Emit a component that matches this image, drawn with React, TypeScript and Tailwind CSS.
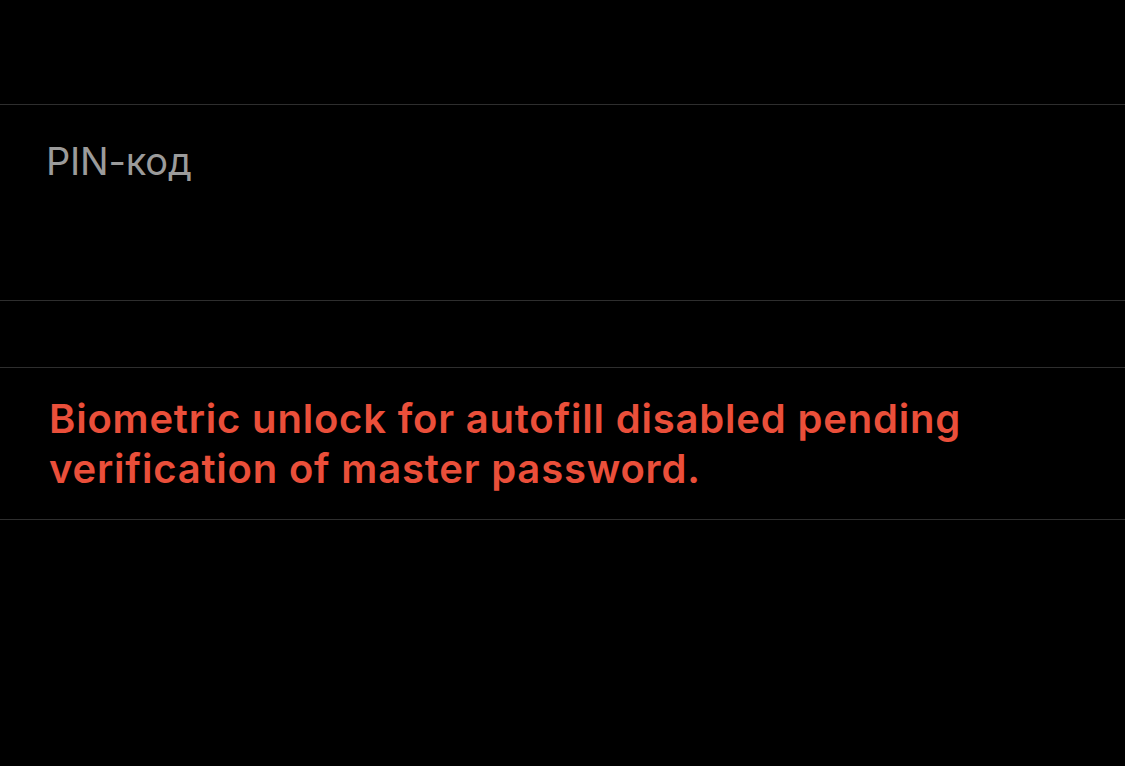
export default function App() {
  return (
    <div className="min-h-[766px] w-full bg-black" style={{ fontFamily: "Inter, 'Noto Sans', sans-serif" }}>
      <div className="h-[104px]"></div>

      {/* PIN row */}
      <div className="h-[197px] border-y border-[#2e2e2e] px-[46px] pt-[32px]">
        <div className="text-[38px] leading-[48px] tracking-[-0.2px] text-[#9b9b9b]">PIN-код</div>
      </div>

      <div className="h-[66px]"></div>

      {/* Error row */}
      <div className="h-[153px] border-y border-[#2e2e2e] px-[49px] pt-[26px]">
        <p className="text-[40px] leading-[50px] tracking-[0.8px] font-semibold text-[#ea4f3a]">
          Biometric unlock for autofill disabled pending
          <br />
          verification of master password.
        </p>
      </div>
    </div>
  );
}
